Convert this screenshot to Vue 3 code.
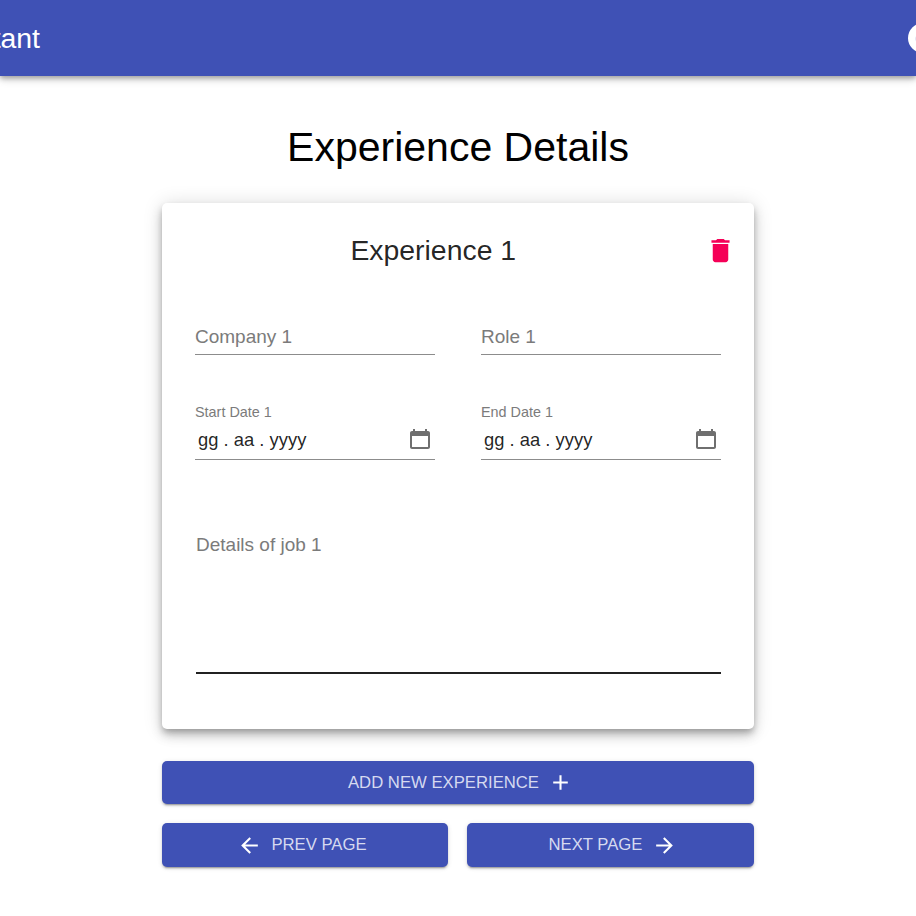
<script setup>
const rows = [
  { company: 'Company 1', role: 'Role 1', start: 'Start Date 1', end: 'End Date 1' }
]
</script>

<template>
  <div class="page">
    <header class="toolbar">
      <div class="brand"><span class="brand-text">Resume Assistant</span></div>
      <svg class="avatar" viewBox="0 0 24 24"><circle cx="12" cy="12" r="10" fill="#fff"/><ellipse cx="10" cy="12.5" rx="3" ry="3.6" fill="#c5cae9"/></svg>
    </header>

    <main class="content">
      <h1 class="title">Experience Details</h1>

      <section v-for="row in rows" :key="row.company" class="card">
        <div class="card-head">
          <h2 class="card-title">Experience 1</h2>
          <svg class="trash" viewBox="0 0 24 24"><path fill="#f50057" d="M6 19c0 1.1.9 2 2 2h8c1.1 0 2-.9 2-2V7H6v12zM19 4h-3.5l-1-1h-5l-1 1H5v2h14V4z"/></svg>
        </div>

        <div class="field-grid">
          <div class="field"><span class="placeholder">{{ row.company }}</span></div>
          <div class="field"><span class="placeholder">{{ row.role }}</span></div>
        </div>

        <div class="field-grid">
          <div class="date-field">
            <span class="small-label">{{ row.start }}</span>
            <div class="date-value">
              <span>gg . aa . yyyy</span>
              <svg class="cal" viewBox="0 0 24 24"><path fill="#6f6f6f" d="M20 3h-1V1h-2v2H7V1H5v2H4c-1.1 0-2 .9-2 2v14c0 1.1.9 2 2 2h16c1.1 0 2-.9 2-2V5c0-1.1-.9-2-2-2zm0 16H4V8h16v11z"/></svg>
            </div>
          </div>
          <div class="date-field">
            <span class="small-label">{{ row.end }}</span>
            <div class="date-value">
              <span>gg . aa . yyyy</span>
              <svg class="cal" viewBox="0 0 24 24"><path fill="#6f6f6f" d="M20 3h-1V1h-2v2H7V1H5v2H4c-1.1 0-2 .9-2 2v14c0 1.1.9 2 2 2h16c1.1 0 2-.9 2-2V5c0-1.1-.9-2-2-2zm0 16H4V8h16v11z"/></svg>
            </div>
          </div>
        </div>

        <div class="details"><span class="placeholder">Details of job 1</span></div>
      </section>

      <button class="btn wide">
        <span>ADD NEW EXPERIENCE</span>
        <svg class="btn-icon" viewBox="0 0 24 24"><path fill="currentColor" d="M19 13h-6v6h-2v-6H5v-2h6V5h2v6h6v2z"/></svg>
      </button>

      <div class="pager">
        <button class="btn prev">
          <svg class="btn-icon" viewBox="0 0 24 24"><path fill="currentColor" d="M20 11H7.83l5.59-5.59L12 4l-8 8 8 8 1.41-1.41L7.83 13H20v-2z"/></svg>
          <span>PREV PAGE</span>
        </button>
        <button class="btn next">
          <span>NEXT PAGE</span>
          <svg class="btn-icon" viewBox="0 0 24 24"><path fill="currentColor" d="M12 4l-1.41 1.41L16.17 11H4v2h12.17l-5.58 5.59L12 20l8-8z"/></svg>
        </button>
      </div>
    </main>
  </div>
</template>

<style>
html, body { margin: 0; overflow: hidden; background: #fff; }
</style>

<style scoped>
.page {
  width: 916px;
  height: 916px;
  overflow: hidden;
  font-family: "Liberation Sans", Arial, sans-serif;
}
.toolbar {
  height: 76px;
  background: #3f51b5;
  display: flex;
  align-items: center;
  justify-content: space-between;
  box-shadow: 0 2px 5px rgba(0,0,0,.3), 0 4px 8px rgba(0,0,0,.14);
  position: relative;
}
.brand {
  width: 40px;
  display: flex;
  justify-content: flex-end;
  white-space: nowrap;
  color: #fff;
  font-size: 28.4px;
}
.avatar {
  width: 36px;
  height: 36px;
  flex: none;
  margin-right: -25px;
}
.content {
  width: 592px;
  margin: 0 auto;
  display: flex;
  flex-direction: column;
}
.title {
  margin: 48px 0 33px;
  font-size: 41px;
  line-height: 46px;
  font-weight: 400;
  text-align: center;
  color: #000;
}
.card {
  height: 526px;
  box-sizing: border-box;
  padding: 27px 32px 0 33px;
  background: #fff;
  border-radius: 5px;
  box-shadow: 0 4px 6px -1px rgba(0,0,0,.24), 0 7px 12px rgba(0,0,0,.16), 0 1px 20px rgba(0,0,0,.14);
  display: flex;
  flex-direction: column;
}
.card-head {
  display: flex;
  align-items: center;
  height: 40px;
}
.card-title {
  flex: 1;
  margin: 0;
  padding-right: 33px;
  font-size: 28.4px;
  font-weight: 400;
  text-align: center;
  color: rgba(0,0,0,.87);
}
.trash {
  width: 31px;
  height: 31px;
  flex: none;
  margin-right: -13.5px;
}
.field-grid {
  display: grid;
  grid-template-columns: 240px 240px;
  column-gap: 46px;
  margin-top: 49px;
}
.card-head + .field-grid { margin-top: 50px; }
.field {
  height: 35px;
  box-sizing: border-box;
  border-bottom: 1px solid #8c8c8c;
  display: flex;
  align-items: flex-start;
  padding-top: 6px;
}
.placeholder {
  font-size: 19px;
  line-height: 22px;
  color: #7b7b7b;
}
.date-field {
  display: flex;
  flex-direction: column;
  height: 56px;
  box-sizing: border-box;
  border-bottom: 1px solid #8c8c8c;
}
.small-label {
  font-size: 14.4px;
  line-height: 16px;
  color: #7b7b7b;
}
.date-value {
  flex: 1;
  display: flex;
  align-items: center;
  justify-content: space-between;
  padding: 0 3px;
  font-size: 18.4px;
  color: rgba(0,0,0,.87);
}
.cal {
  width: 24px;
  height: 24px;
}
.details {
  flex: none;
  margin-top: 74px;
  height: 140px;
  width: 525px;
  margin-left: 1px;
  box-sizing: border-box;
  border-bottom: 2px solid #212121;
}
.btn {
  height: 43px;
  display: flex;
  align-items: center;
  justify-content: center;
  gap: 9px;
  border: 0;
  padding: 0;
  border-radius: 5px;
  background: #3f51b5;
  color: #fff;
  font-family: inherit;
  font-size: 16.7px;
  box-shadow: 0 3px 1px -2px rgba(0,0,0,.2), 0 2px 2px rgba(0,0,0,.14), 0 1px 5px rgba(0,0,0,.12);
}
.btn span { color: #d6daf0; }
.wide { margin-top: 32px; padding-left: 5px; }
.pager {
  display: grid;
  grid-template-columns: 286px 287px;
  column-gap: 19px;
  margin-top: 19px;
}
.pager .btn { height: 44px; }
.prev { padding-right: 6px; }
.next { padding-left: 5px; gap: 10px; }
.btn-icon {
  width: 25px;
  height: 25px;
}
</style>
